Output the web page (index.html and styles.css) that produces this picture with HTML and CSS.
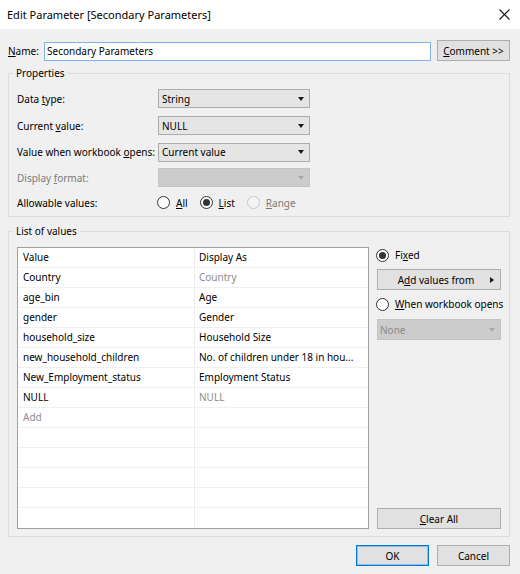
FILE: index.html
```html
<!DOCTYPE html>
<html>
<head>
<meta charset="utf-8">
<link rel="stylesheet" href="styles.css">
</head>
<body>
<div class="window">
  <div class="titlebar">
    <span class="title">Edit Parameter [Secondary Parameters]</span>
    <svg class="close" width="11" height="11" viewBox="0 0 11 11"><path d="M0.5 0.5L10.5 10.5M10.5 0.5L0.5 10.5" stroke="#1b1b1b" stroke-width="1.1" fill="none"/></svg>
  </div>
  <div class="content">
    <div class="name-row">
      <span class="name-label"><u>N</u>ame:</span>
      <div class="textbox">Secondary Parameters</div>
      <div class="btn comment"><u>C</u>omment &gt;&gt;</div>
    </div>

    <fieldset class="group props">
      <legend>Properties</legend>
      <div class="prop-grid">
        <span>Data <u>t</u>ype:</span>
        <div class="combo"><span>String</span><i class="arrow"></i></div>
        <span>Current <u>v</u>alue:</span>
        <div class="combo"><span>NULL</span><i class="arrow"></i></div>
        <span>Value when workbook <u>o</u>pens:</span>
        <div class="combo"><span>Current value</span><i class="arrow"></i></div>
        <span class="disabled">Display <u>f</u>ormat:</span>
        <div class="combo off"><span></span><i class="arrow"></i></div>
        <span>Allowable values:</span>
        <div class="radios">
          <span class="opt"><i class="radio"></i><span><u>A</u>ll</span></span>
          <span class="opt"><i class="radio on"></i><span><u>L</u>ist</span></span>
          <span class="opt disabled"><i class="radio off"></i><span><u>R</u>ange</span></span>
        </div>
      </div>
    </fieldset>

    <fieldset class="group values">
      <legend>List of values</legend>
      <div class="values-body">
        <div class="table">
          <div class="cell c1">Value</div><div class="cell">Display As</div>
          <div class="cell c1">Country</div><div class="cell muted">Country</div>
          <div class="cell c1">age_bin</div><div class="cell">Age</div>
          <div class="cell c1">gender</div><div class="cell">Gender</div>
          <div class="cell c1">household_size</div><div class="cell">Household Size</div>
          <div class="cell c1">new_household_children</div><div class="cell">No. of children under 18 in hou...</div>
          <div class="cell c1">New_Employment_status</div><div class="cell">Employment Status</div>
          <div class="cell c1">NULL</div><div class="cell muted">NULL</div>
          <div class="cell c1 muted">Add</div><div class="cell"></div>
          <div class="cell c1"></div><div class="cell"></div>
          <div class="cell c1"></div><div class="cell"></div>
          <div class="cell c1"></div><div class="cell"></div>
          <div class="cell c1"></div><div class="cell"></div>
          <div class="cell c1 last"></div><div class="cell last"></div>
        </div>
        <div class="side">
          <span class="opt side-opt"><i class="radio on"></i><span>Fi<u>x</u>ed</span></span>
          <div class="btn addvals"><span class="btn-label">A<u>d</u>d values from</span><i class="rarrow"></i></div>
          <span class="opt side-opt when"><i class="radio"></i><span><u>W</u>hen workbook opens</span></span>
          <div class="combo off none"><span>None</span><i class="arrow"></i></div>
          <div class="btn clear"><u>C</u>lear All</div>
        </div>
      </div>
    </fieldset>

    <div class="footer">
      <div class="btn ok">OK</div>
      <div class="btn cancel">Cancel</div>
    </div>
  </div>
</div>
</body>
</html>
```

FILE: styles.css
```css
* { box-sizing: border-box; }
html, body { margin: 0; padding: 0; background: #f0f0f0; }
body {
  font-family: "Noto Sans", "Open Sans", sans-serif;
  font-size: 10px;
  color: #000;
  white-space: nowrap;
}
u { text-decoration: underline; text-underline-offset: 1px; }

.window {
  width: 520px;
  height: 574px;
  overflow: hidden;
  background: #f0f0f0;
}

.titlebar {
  height: 29px;
  background: #fff;
  display: flex;
  align-items: center;
  justify-content: space-between;
  padding: 0 10px 0 7px;
}
.title { font-size: 11px; color: #000; }
.close { display: block; margin-top: -1px; }

.content { padding: 0 10px 0 8px; }

.name-row {
  margin-top: 12px;
  height: 20px;
  display: flex;
  align-items: center;
}
.name-label { width: 36px; }
.textbox {
  flex: 1;
  height: 19px;
  border: 1px solid #7eb4ea;
  background: #fff;
  padding-left: 2px;
  line-height: 17px;
}
.btn {
  background: #e1e1e1;
  border: 1px solid #adadad;
  height: 21px;
  display: flex;
  align-items: center;
  justify-content: center;
}
.comment { width: 73px; margin-left: 6px; height: 21px; margin-top: -1px; }

.group {
  margin: 0;
  border: 1px solid #dcdcdc;
  padding: 0 8px;
  min-width: 0;
}
.group legend {
  padding: 0 3px;
  margin-left: -4px;
  line-height: 16px;
  height: 16px;
}
.props { margin-top: 4px; padding-bottom: 1px; }
.values { margin-top: 6px; padding-bottom: 7px; }

.prop-grid {
  margin-top: 4px;
  display: grid;
  grid-template-columns: 141px 152px;
  grid-template-rows: 27px 27px 26px 25px 25px;
  align-items: center;
}
.disabled { color: #7a7a7a; }

.combo {
  height: 19px;
  background: #e5e5e5;
  border: 1px solid #acacac;
  display: flex;
  align-items: center;
  justify-content: space-between;
  padding: 0 5px 0 3px;
}
.combo.off { background: #cccccc; border-color: #c4c4c4; color: #8a8a8a; }
.arrow {
  width: 0; height: 0;
  border-left: 3.5px solid transparent;
  border-right: 3.5px solid transparent;
  border-top: 4px solid #1a1a1a;
}
.combo.off .arrow { border-top-color: #a8a8a8; }

.radios { display: flex; align-items: center; height: 16px; margin-left: -1px; }
.opt { display: flex; align-items: center; gap: 6px; margin-right: 12px; }
.radio {
  width: 13px; height: 13px;
  border-radius: 50%;
  border: 1px solid #333;
  background: #fff;
  display: flex;
  align-items: center;
  justify-content: center;
  flex: none;
}
.radio.on::after {
  content: "";
  width: 7px; height: 7px;
  border-radius: 50%;
  background: #333;
}
.radio.off { border-color: #c8c8c8; background: #f4f4f4; }

.values-body {
  margin-top: 8px;
  display: flex;
  gap: 8px;
}
.table {
  width: 352px;
  border: 1px solid #a0a0a0;
  background: #fff;
  display: grid;
  grid-template-columns: 177px 173px;
  grid-auto-rows: 20px;
}
.cell {
  border-bottom: 1px solid #f0f0f0;
  padding-left: 4px;
  line-height: 19px;
  overflow: hidden;
}
.cell.c1 { border-right: 1px solid #ececec; padding-left: 5px; }
.cell.last { border-bottom: none; }
.muted { color: #8c8c8c; }

.side {
  flex: 1;
  min-width: 0;
  display: flex;
  flex-direction: column;
}
.side-opt { height: 16px; margin-left: -1px; margin-right: 0; }
.addvals { margin-top: 6px; padding-right: 6px; }
.addvals .btn-label { flex: 1; text-align: center; padding-left: 4px; }
.rarrow {
  width: 0; height: 0;
  border-top: 3.5px solid transparent;
  border-bottom: 3.5px solid transparent;
  border-left: 4px solid #1a1a1a;
}
.when { margin-top: 6px; }
.none { margin-top: 7px; height: 21px; padding-left: 2px; }
.clear { margin-top: auto; }

.footer {
  margin-top: 8px;
  display: flex;
  justify-content: flex-end;
  gap: 8px;
}
.ok, .cancel { width: 73px; }
.ok { border-color: #0078d7; box-shadow: inset 0 0 0 1px rgba(0,120,215,0.35); }
```
